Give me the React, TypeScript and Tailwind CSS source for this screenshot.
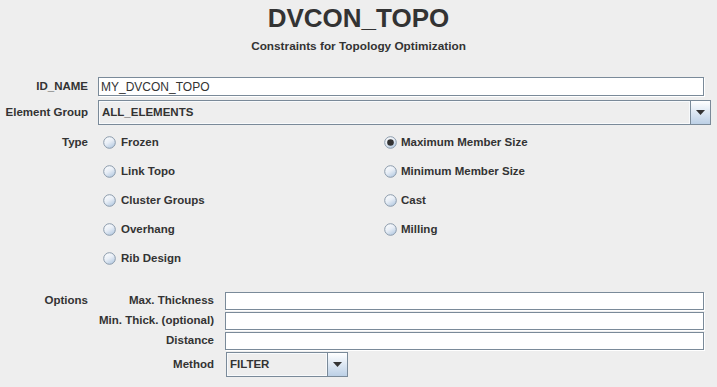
import React from "react";

function Radio({ checked = false }: { checked?: boolean }) {
  return (
    <svg width="13" height="13" viewBox="0 0 13 13" className="shrink-0">
      <defs>
        <linearGradient id="rg" x1="0" y1="0" x2="0.6" y2="1">
          <stop offset="0%" stopColor="#ffffff" />
          <stop offset="55%" stopColor="#e8eef6" />
          <stop offset="100%" stopColor="#b9cde3" />
        </linearGradient>
      </defs>
      <circle cx="6.5" cy="6.5" r="5.8" fill="url(#rg)" stroke="#8a9aab" strokeWidth="1" />
      {checked && <circle cx="6.5" cy="6.5" r="3.3" fill="#333333" />}
    </svg>
  );
}

function TextField({ value = "", className = "" }: { value?: string; className?: string }) {
  return (
    <div
      className={`bg-white border border-[#7a8a99] shadow-[1px_1px_0_#ffffff] pl-[2px] flex items-center text-[12px] font-normal ${className}`}
    >
      {value}
    </div>
  );
}

function Combo({ value, className = "" }: { value: string; className?: string }) {
  return (
    <div className={`flex border border-[#7a8a99] bg-[#eeeeee] ${className}`}>
      <div className="flex-1 flex items-center pl-[2px] border border-[#f8fafc] text-[11.5px] font-bold">
        {value}
      </div>
      <div className="w-[20px] flex items-center justify-center border-l border-[#7a8a99] bg-gradient-to-b from-white to-[#bcd0e6]">
        <svg width="9" height="5" viewBox="0 0 9 5">
          <polygon points="0,0 9,0 4.5,5" fill="#333333" />
        </svg>
      </div>
    </div>
  );
}

const leftTypes = ["Frozen", "Link Topo", "Cluster Groups", "Overhang", "Rib Design"];
const rightTypes = ["Maximum Member Size", "Minimum Member Size", "Cast", "Milling"];

export default function App() {
  return (
    <div className="w-[717px] h-[387px] bg-[#eeeeee] text-[#333333] font-['Liberation_Sans',Arial,sans-serif] font-bold overflow-hidden">
      <div className="pt-[3px] text-center text-[26px] leading-[30px]">DVCON_TOPO</div>
      <div className="mt-[6px] text-center text-[11.8px] leading-[14px]">
        Constraints for Topology Optimization
      </div>

      <div className="mt-[24px] flex items-center h-[19px] text-[11.5px]">
        <div className="w-[88px] text-right">ID_NAME</div>
        <TextField value="MY_DVCON_TOPO" className="ml-[10px] w-[606px] h-[19px]" />
      </div>

      <div className="mt-[4px] flex items-center text-[11.5px]">
        <div className="w-[88px] text-right">Element Group</div>
        <Combo value="ALL_ELEMENTS" className="ml-[10px] w-[613px] h-[25px]" />
      </div>

      <div className="mt-[3px] flex text-[11.5px]">
        <div className="w-[88px] h-[29px] flex items-center justify-end">Type</div>
        <div className="ml-[15px] w-[281px] flex flex-col">
          {leftTypes.map((t) => (
            <div key={t} className="h-[29px] flex items-center gap-[5px]">
              <Radio />
              <span>{t}</span>
            </div>
          ))}
        </div>
        <div className="flex flex-col">
          {rightTypes.map((t, i) => (
            <div key={t} className="h-[29px] flex items-center gap-[4px]">
              <Radio checked={i === 0} />
              <span>{t}</span>
            </div>
          ))}
        </div>
      </div>

      <div className="mt-[19px] flex text-[11.5px]">
        <div className="w-[88px] h-[18px] flex items-center justify-end">Options</div>
        <div className="flex flex-col gap-[2px]">
          {["Max. Thickness", "Min. Thick. (optional)", "Distance"].map((l) => (
            <div key={l} className="flex items-center h-[18px]">
              <div className="w-[126px] text-right">{l}</div>
              <TextField className="ml-[11px] w-[479px] h-[18px]" />
            </div>
          ))}
          <div className="flex items-center h-[25px]">
            <div className="w-[126px] text-right">Method</div>
            <Combo value="FILTER" className="ml-[12px] w-[122px] h-[25px]" />
          </div>
        </div>
      </div>
    </div>
  );
}
